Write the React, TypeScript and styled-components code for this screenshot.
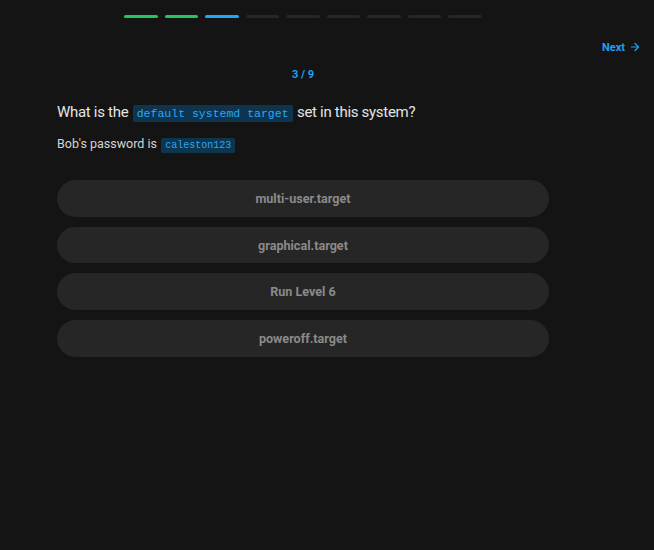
import React from "react";
import styled, { createGlobalStyle } from "styled-components";

const Global = createGlobalStyle`
  html, body { margin: 0; padding: 0; background: #141414; }
  body { font-family: Roboto, "Noto Sans", sans-serif; color: #e5e5e5; }
`;

const Page = styled.div`
  width: 654px;
  height: 550px;
  background: #141414;
  position: relative;
`;

const Column = styled.div`
  width: 492px;
  margin-left: 57px;
  display: flex;
  flex-direction: column;
`;

const Progress = styled.div`
  display: flex;
  justify-content: center;
  gap: 6.7px;
  padding-top: 15px;
`;

const Segment = styled.div<{ $color: string }>`
  width: 33.8px;
  height: 3px;
  border-radius: 2px;
  background: ${(p) => p.$color};
`;

const NavRow = styled.div`
  display: flex;
  justify-content: flex-end;
  padding: 22px 13px 0 0;
  height: 14px;
`;

const NextButton = styled.button`
  display: flex;
  align-items: center;
  gap: 4px;
  background: none;
  border: none;
  padding: 0;
  color: #1ea1f1;
  font-family: Roboto, sans-serif;
  font-weight: 700;
  font-size: 11px;
  cursor: pointer;
`;

const Counter = styled.div`
  text-align: center;
  color: #1ea1f1;
  font-weight: 700;
  font-size: 11px;
  margin-top: 14px;
`;

const Question = styled.div`
  font-size: 15px;
  letter-spacing: -0.3px;
  color: #e5e5e5;
  margin-top: 21px;
  line-height: 20px;
`;

const Sub = styled.div`
  font-size: 12.5px;
  color: #d4d4d4;
  margin-top: 11px;
  line-height: 18px;
`;

const Code = styled.code<{ $size: number }>`
  font-family: "Liberation Mono", "DejaVu Sans Mono", monospace;
  font-size: ${(p) => p.$size}px;
  letter-spacing: 0;
  background: #0d3550;
  color: #2ea8f0;
  padding: 2px 4px;
  border-radius: 2px;
  margin: 0 1px;
`;

const Options = styled.div`
  display: flex;
  flex-direction: column;
  gap: 10px;
  margin-top: 25px;
`;

const Option = styled.button`
  height: 36.7px;
  border-radius: 999px;
  border: none;
  background: #262626;
  color: #8a8a8a;
  font-family: Roboto, sans-serif;
  font-weight: 700;
  font-size: 12.6px;
  cursor: pointer;
`;

const segs = ["#22c55e", "#22c55e", "#1ea7f5", "#262626", "#262626", "#262626", "#262626", "#262626", "#262626"];
const opts = ["multi-user.target", "graphical.target", "Run Level 6", "poweroff.target"];

export default function App() {
  return (
    <Page>
      <Global />
      <Column>
        <Progress>
          {segs.map((c, i) => (
            <Segment key={i} $color={c} />
          ))}
        </Progress>
      </Column>
      <NavRow>
        <NextButton>
          Next
          <svg width="12" height="12" viewBox="0 0 24 24" fill="none" stroke="currentColor" strokeWidth="2.4" strokeLinecap="round" strokeLinejoin="round">
            <path d="M5 12h14" />
            <path d="M12 5l7 7-7 7" />
          </svg>
        </NextButton>
      </NavRow>
      <Column>
        <Counter>3 / 9</Counter>
        <Question>
          What is the <Code $size={11.5}>default systemd target</Code> set in this system?
        </Question>
        <Sub>
          Bob's password is <Code $size={10}>caleston123</Code>
        </Sub>
        <Options>
          {opts.map((o) => (
            <Option key={o}>{o}</Option>
          ))}
        </Options>
      </Column>
    </Page>
  );
}
